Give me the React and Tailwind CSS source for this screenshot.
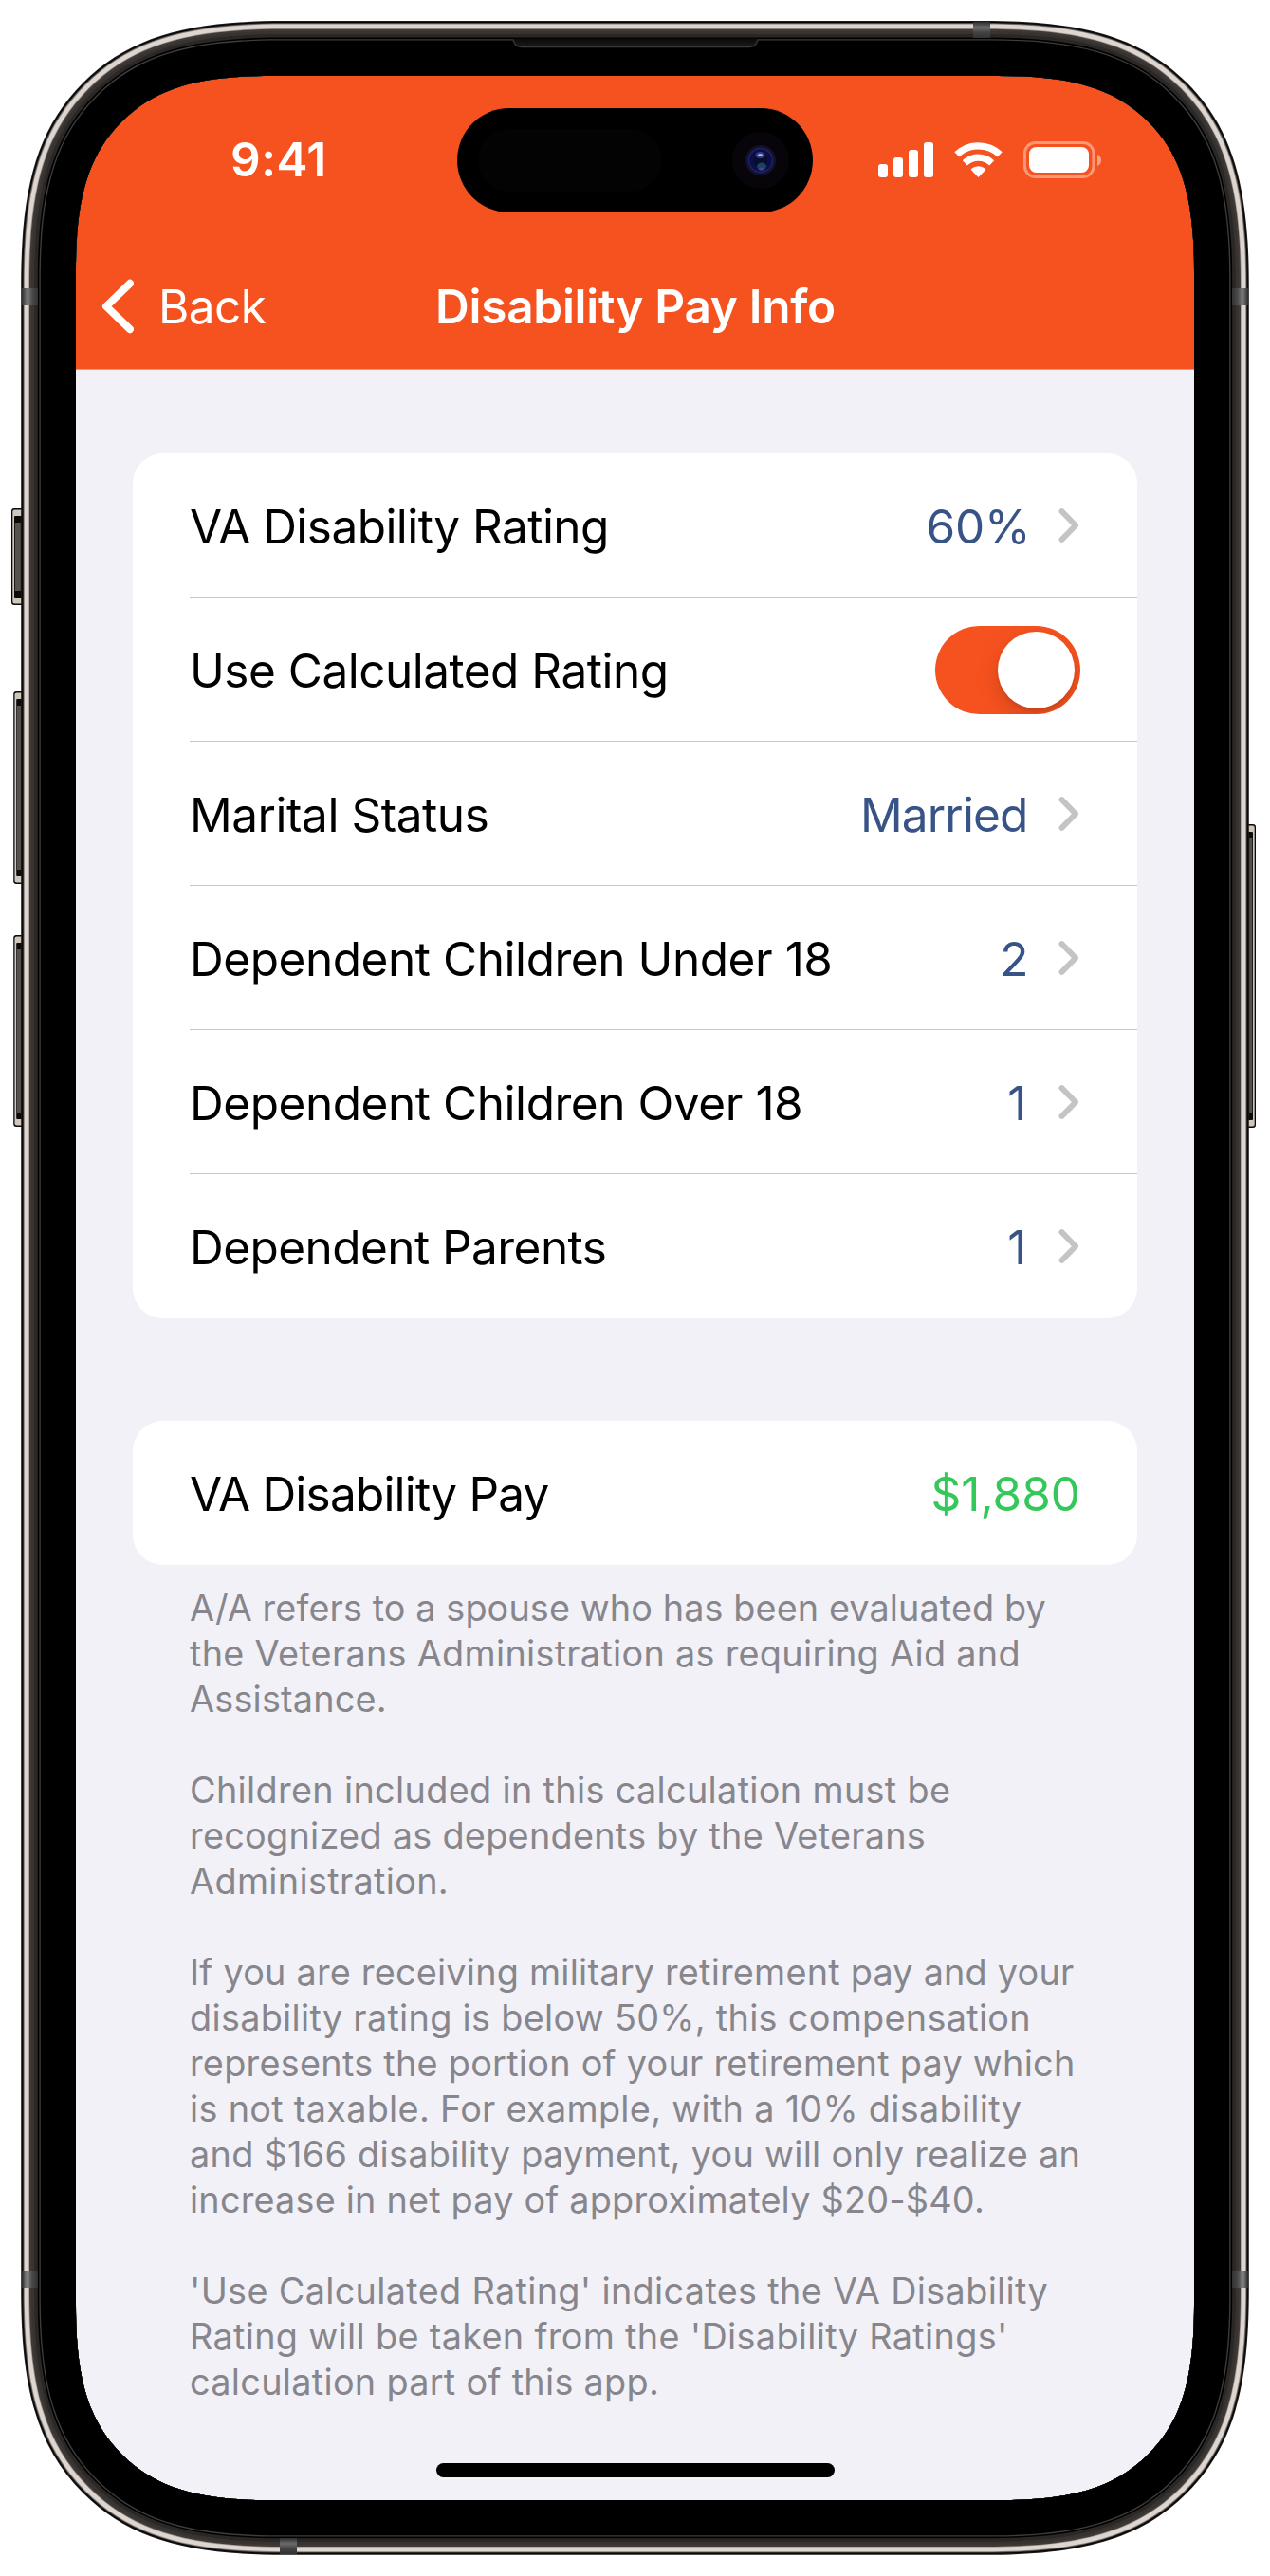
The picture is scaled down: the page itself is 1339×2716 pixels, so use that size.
// One corner as two mirrored cubics, in multiples of the radius.
const CORNERS = [
  [1.25, 0, 0.8, 0, 0.5155, 0.0705, 0.293, 0.293],
  [0.293, 0.293, 0.0705, 0.5155, 0, 0.8, 0, 1.25],
];

// Continuous-curvature rounded rectangle.
function squircle(x0, y0, x1, y1, r) {
  const p = (sx, sy, a, b) =>
    `${(sx > 0 ? x0 + a * r : x1 - a * r).toFixed(2)} ${(sy > 0 ? y0 + b * r : y1 - b * r).toFixed(2)}`;
  const forward = (sx, sy) =>
    `${p(sx, sy, 1.25, 0)} ` +
    CORNERS.map((c) => `C${p(sx, sy, c[2], c[3])} ${p(sx, sy, c[4], c[5])} ${p(sx, sy, c[6], c[7])}`).join(" ");
  const backward = (sx, sy) =>
    `${p(sx, sy, 0, 1.25)} ` +
    [...CORNERS]
      .reverse()
      .map((c) => `C${p(sx, sy, c[4], c[5])} ${p(sx, sy, c[2], c[3])} ${p(sx, sy, c[0], c[1])}`)
      .join(" ");
  return `M${forward(1, 1)} L${backward(1, -1)} L${forward(-1, -1)} L${backward(-1, 1)} Z`;
}

const HOLE = squircle(80, 80, 1259, 2636, 165);

const RINGS = [
  [0, "#1a1a1a"],
  [1, "#050505"],
  [2, "#3d3835"],
  [2.8, "#8d837c"],
  [3.6, "#ddd5d0"],
  [8, "#a39a93"],
  [8.8, "#3f3a38"],
  [11, "#373331"],
  [14, "#2b2725"],
  [17.6, "#000000"],
  [19.2, "#3c3c3c"],
  [20.6, "#000000"],
];

function SideButton({ x, y, w, h, flip }) {
  const fx = flip ? `translate(${2 * x + w} 0) scale(-1 1)` : undefined;
  return (
    <g transform={fx}>
      <rect x={x} y={y} width={w + 4} height={h} rx="3" fill="#0b0b0b" />
      <rect x={x + 1.3} y={y + 1.6} width={w} height={h - 3.2} rx="2" fill="#cfc6bd" />
      <rect x={x + 3} y={y + 8} width={w} height={h - 16} rx="1" fill="#0c0b0a" />
      <rect x={x + 3.8} y={y + 15} width={w - 5} height={h - 30} fill="#57514d" />
    </g>
  );
}

function PhoneFrame() {
  return (
    <svg className="pointer-events-none absolute inset-0" width="1339" height="2716" viewBox="0 0 1339 2716">
      <defs>
        <linearGradient id="bandL" x1="0" x2="1" y1="0" y2="0">
          <stop offset="0" stopColor="#2c2c2c" />
          <stop offset="0.35" stopColor="#7d7d7d" />
          <stop offset="0.65" stopColor="#4a4a4a" />
          <stop offset="1" stopColor="#333333" />
        </linearGradient>
        <linearGradient id="bandR" x1="1" x2="0" y1="0" y2="0">
          <stop offset="0" stopColor="#2c2c2c" />
          <stop offset="0.35" stopColor="#7d7d7d" />
          <stop offset="0.65" stopColor="#4a4a4a" />
          <stop offset="1" stopColor="#333333" />
        </linearGradient>
        <linearGradient id="bandV" x1="0" x2="0" y1="0" y2="1">
          <stop offset="0" stopColor="#2c2c2c" />
          <stop offset="0.35" stopColor="#6c6c6c" />
          <stop offset="0.65" stopColor="#444444" />
          <stop offset="1" stopColor="#333333" />
        </linearGradient>
        <linearGradient id="speaker" x1="0" x2="0" y1="0" y2="1">
          <stop offset="0" stopColor="#0a0a0a" />
          <stop offset="1" stopColor="#1c1b1b" />
        </linearGradient>
      </defs>
      <SideButton x={12} y={536} w={11} h={102} />
      <SideButton x={14.2} y={729} w={9} h={203} />
      <SideButton x={14.2} y={986} w={9} h={202} />
      <SideButton x={1316} y={869} w={8} h={320} flip />
      {RINGS.map(([d, fill]) => (
        <path
          key={d}
          fill={fill}
          fillRule="evenodd"
          d={squircle(22.2 + d, 22 + d, 1316.8 - d, 2693.8 - d, 223 - d) + HOLE}
        />
      ))}
      <rect x="23" y="304" width="17" height="18" fill="url(#bandL)" />
      <rect x="1299" y="304" width="17" height="18" fill="url(#bandR)" />
      <rect x="23" y="2394" width="17" height="18" fill="url(#bandL)" opacity="0.9" />
      <rect x="1299" y="2394" width="17" height="18" fill="url(#bandR)" opacity="0.9" />
      <rect x="1026" y="23" width="18" height="17" fill="url(#bandV)" />
      <rect x="295" y="2676" width="18" height="17" fill="url(#bandV)" />
      <path d="M541 40.5c1.5 6.500 4 9 9 9H790c5 0 7.500-2.500 9-9Z" fill="url(#speaker)" />
      <path d="M541 42c1.500 5.500 4 7.600 9 7.600H790c5 0 7.500-2.100 9-7.600" fill="none" stroke="#3a3938" strokeWidth="1.200" />
    </svg>
  );
}

function Island() {
  return (
    <svg className="absolute left-[402px] top-[34px]" width="375" height="110" viewBox="0 0 375 110">
      <rect width="375" height="110" rx="55" fill="#000" />
      <rect x="22" y="22" width="194" height="66" rx="33" fill="#030303" />
      <circle cx="320" cy="55" r="30" fill="#070509" />
      <circle cx="320" cy="55" r="16" fill="#12132a" />
      <circle cx="320" cy="55" r="12.500" fill="#0c0f45" />
      <circle cx="320" cy="55" r="12.500" fill="none" stroke="#1d2268" strokeWidth="1.500" />
      <ellipse cx="320" cy="55" rx="7" ry="9" fill="#0a0c2b" />
      <ellipse cx="319.500" cy="49.500" rx="5" ry="3.500" fill="#343c86" />
      <ellipse cx="319.500" cy="49.500" rx="2.600" ry="1.500" fill="#a9b0ea" />
      <ellipse cx="321" cy="61.500" rx="5" ry="4" fill="#17445f" />
      <ellipse cx="320.500" cy="64" rx="2.500" ry="1.600" fill="#5f36a0" />
    </svg>
  );
}

function StatusIcons() {
  return (
    <svg width="236" height="39" viewBox="926 148 236 39" fill="#fff">
      <rect x="926" y="172" width="10" height="14" rx="3" />
      <rect x="942" y="165" width="10" height="21" rx="3" />
      <rect x="958" y="157" width="10" height="29" rx="3" />
      <rect x="974" y="149" width="10" height="37" rx="3" />
      <g fill="none" stroke="#fff">
        <path d="M1008.800 161.900a33 33 0 0 1 45.400 0" strokeWidth="7.200" />
        <path d="M1017.300 170.800a20.500 20.500 0 0 1 28.400 0" strokeWidth="7.200" />
      </g>
      <path d="M1031.500 186l-7.300-7.400c-.6-.6-.6-1.300.1-1.800a11.500 11.500 0 0 1 14.400 0c.7.5.7 1.200.1 1.800Z" />
      <rect x="1080.500" y="149.500" width="72.500" height="36" rx="11" fill="none" stroke="#fff" strokeOpacity="0.4" strokeWidth="3" />
      <rect x="1085" y="154" width="63" height="27" rx="7.500" />
      <path d="M1157 162c2.600 1 4 3.300 4 6s-1.400 5-4 6Z" fillOpacity="0.45" />
    </svg>
  );
}

function Chevron() {
  return (
    <svg width="23.5" height="38" viewBox="0 0 23.5 38" fill="none" stroke="#c4c4c7" strokeWidth="6" strokeLinecap="round" strokeLinejoin="round">
      <path d="M3.500 4.200 18 19 3.500 33.800" />
    </svg>
  );
}

function Toggle() {
  return (
    <span className="mt-0.5 flex h-[93px] w-[153px] items-center justify-end overflow-hidden rounded-full bg-[#f6521f] p-1.5">
      <span className="size-[81px] rounded-full bg-white shadow-[0_9px_24px_rgba(0,0,0,0.15),0_3px_3px_rgba(0,0,0,0.08)]" />
    </span>
  );
}

const ROWS = [
  { label: "VA Disability Rating", track: "tracking-[-0.55px]", value: "60%", valueTrack: "-mr-[3px] tracking-[-0.2px]" },
  { label: "Use Calculated Rating", track: "tracking-[-0.5px]", toggle: true },
  { label: "Marital Status", track: "tracking-[-0.45px]", value: "Married", valueTrack: "tracking-[-0.85px]" },
  { label: "Dependent Children Under 18", track: "tracking-[-0.45px]", value: "2", valueTrack: "-mr-px" },
  { label: "Dependent Children Over 18", track: "tracking-[-0.45px]", value: "1", valueTrack: "mr-px" },
  { label: "Dependent Parents", track: "tracking-[-0.55px]", value: "1", valueTrack: "mr-px" },
];

const NOTES = [
  [
    ["A/A refers to a spouse who has been evaluated by", "tracking-[0.1px]"],
    ["the Veterans Administration as requiring Aid and", "tracking-[0.29px]"],
    ["Assistance.", "tracking-[0.2px]"],
  ],
  [
    ["Children included in this calculation must be", "tracking-[0.33px]"],
    ["recognized as dependents by the Veterans", "tracking-[0.28px]"],
    ["Administration.", "tracking-[0.33px]"],
  ],
  [
    ["If you are receiving military retirement pay and your", "tracking-[0.22px]"],
    ["disability rating is below 50%, this compensation", "tracking-[0.3px]"],
    ["represents the portion of your retirement pay which", "tracking-[0.27px]"],
    ["is not taxable. For example, with a 10% disability", "tracking-[0.3px]"],
    ["and $166 disability payment, you will only realize an", "tracking-[0.29px]"],
    ["increase in net pay of approximately $20-$40.", "tracking-[0.2px]"],
  ],
  [
    ["'Use Calculated Rating' indicates the VA Disability", "tracking-[0.33px]"],
    ["Rating will be taken from the 'Disability Ratings'", "tracking-[0.33px]"],
    ["calculation part of this app.", "tracking-[0.3px]"],
  ],
];

function Row({ label, track, value, valueTrack = "", toggle, last }) {
  return (
    <div className="flex h-[152px] pl-[60px]">
      <div
        className={
          "flex flex-1 items-center justify-between pr-[60px] " +
          (last ? "pb-px" : "border-b border-[#c6c6c8]")
        }
      >
        <span className={"pt-[5px] " + track}>{label}</span>
        {toggle ? (
          <Toggle />
        ) : (
          <span className="flex items-center gap-[32px] text-[#385487]">
            <span className={"pt-[5px] " + valueTrack}>{value}</span>
            <Chevron />
          </span>
        )}
      </div>
    </div>
  );
}

export default function App() {
  return (
    <div className="relative h-[2716px] w-[1339px] overflow-hidden bg-white p-20 font-['Inter',sans-serif] text-[49.5px] leading-none text-black">
      <div className="relative flex h-[2556px] w-[1179px] flex-col overflow-hidden rounded-[120px] bg-[#f2f1f7]">
        <header className="flex h-[310px] flex-col border-b border-[#b9a9a9] bg-[#f6521f] text-white">
          <div className="flex h-[177px] items-center justify-between pl-[163px] pr-[97px]">
            <span className="font-semibold tracking-[0.5px]">9:41</span>
            <StatusIcons />
          </div>
          <div className="grid h-[132px] grid-cols-[1fr_auto_1fr] items-center">
            <div className="flex items-center gap-[26px] pl-[26px]">
              <svg width="35" height="58" viewBox="0 0 35 58" fill="none" stroke="#fff" strokeWidth="8" strokeLinecap="round" strokeLinejoin="round">
                <path d="M31 4.800 6 29 31 53.200" />
              </svg>
              <span className="pt-0.5 tracking-[-0.6px]">Back</span>
            </div>
            <h1 className="pl-px pt-0.5 font-semibold tracking-[-0.28px]">Disability Pay Info</h1>
          </div>
        </header>

        <main className="flex flex-col px-[60px] pt-[88px]">
          <section className="overflow-hidden rounded-[32px] bg-white">
            {ROWS.map((row, i) => (
              <Row key={row.label} {...row} last={i === ROWS.length - 1} />
            ))}
          </section>

          <section className="mt-[108px] flex h-[152px] items-center justify-between rounded-[32px] bg-white px-[60px] pt-[3px]">
            <span className="tracking-[-0.8px]">VA Disability Pay</span>
            <span className="text-[#34c759]">$1,880</span>
          </section>

          <footer className="mt-[21px] flex flex-col gap-12 whitespace-nowrap px-[60px] text-[37.8px] leading-[48px] text-[#87868c]">
            {NOTES.map((lines) => (
              <p key={lines[0][0]}>
                {lines.map(([text, track]) => (
                  <span key={text} className={"block " + track}>
                    {text}
                  </span>
                ))}
              </p>
            ))}
          </footer>
        </main>

        <Island />
        <div className="absolute bottom-6 left-[380px] h-[15px] w-[420px] rounded-full bg-black" />
      </div>
      <PhoneFrame />
    </div>
  );
}
